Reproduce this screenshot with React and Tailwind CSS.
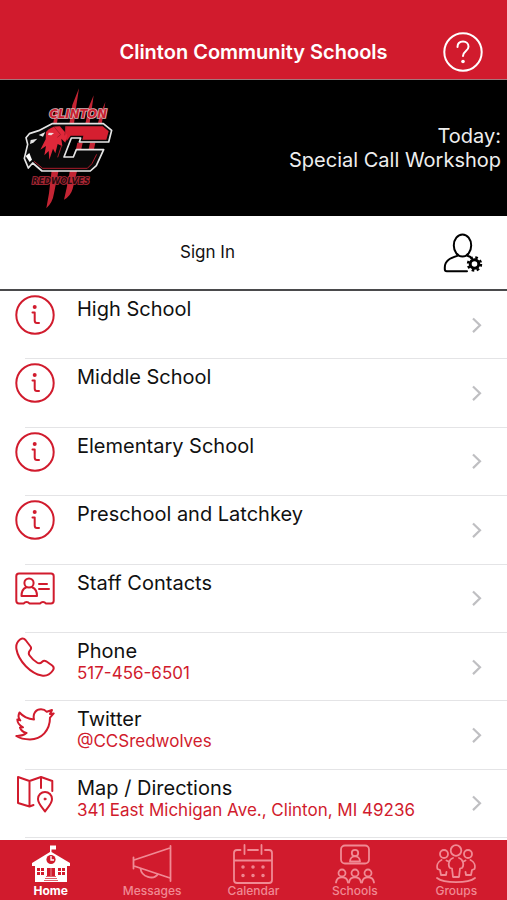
import React from "react";

const stroke = {
  fill: "none",
  stroke: "currentColor",
  strokeLinecap: "round",
  strokeLinejoin: "round",
};

function InfoIcon() {
  return (
    <svg viewBox="0 0 40 40" className="size-10" {...stroke} strokeWidth="2" aria-hidden="true">
      <circle cx="20" cy="20" r="18.7" />
      <circle cx="19.7" cy="12" r="2" fill="currentColor" stroke="none" />
      <path d="M17.5 17.5h2.2v8q0 2.500 2.300 2.500h2" />
    </svg>
  );
}

function StaffIcon() {
  return (
    <svg viewBox="0 0 40 40" className="size-10" {...stroke} strokeWidth="2" aria-hidden="true">
      <path d="M4 4.500h32q2.700 0 2.700 2.700v24.500q0 2.700-2.700 2.700h-5.200a3.400 3.400 0 0 0-5.600 0H14.400a3.400 3.400 0 0 0-5.600 0H4q-2.700 0-2.700-2.700V7.200Q1.300 4.500 4 4.500z" />
      <circle cx="14" cy="14" r="4.600" />
      <path d="M11 18.500c-3 1.200-4.500 4-4.500 8.500h15.500c0-4.500-1.500-7.300-4.500-8.500M24 15h8M24 20h10" />
    </svg>
  );
}

function PhoneIcon() {
  return (
    <svg viewBox="0 0 40 40" className="size-10" {...stroke} strokeWidth="2" aria-hidden="true">
      <path d="M5 2.500C7.500.8 9 1.200 10.500 3l5 6.500c1 1.400.6 2.600-.3 3.600-2 2.200-2 3.400-.6 5.400 2 2.800 4.500 5.200 7.400 7 2 1.300 3.200 1.300 5.200-.8 1.200-1.200 2.500-1.400 4-.4l6 4.200c1.800 1.400 2 3 .6 5-2.600 3.800-6.400 5.800-11 5C16 36.500 3.500 24.500 1.400 12 .8 8 2 4.800 5 2.500z" />
    </svg>
  );
}

function TwitterIcon() {
  return (
    <svg viewBox="0 0 40 40" className="size-10" {...stroke} strokeWidth="2" aria-hidden="true">
      <path d="M4.500 7.500c4 4.500 8.500 6.500 14.500 7-1.500-6 2-10.300 7-10.300 2.700 0 4.400 1 5.800 2.600L37 5l-2 4 3.700-.6-3.700 4.200c0 13-8.500 21.800-20 21.800-5.500 0-10-1-13.700-3.400 4 .2 7.500-.8 10.200-3-3.500-.6-5.500-2.500-6.500-5.300l3-.4C4.500 20.500 2.500 18 2.300 14.500l3 .9C3 13 3 10.500 4.500 7.500z" />
    </svg>
  );
}

function MapIcon() {
  return (
    <svg viewBox="0 0 40 40" className="size-10" {...stroke} strokeWidth="2" aria-hidden="true">
      <path d="M3 3l11.500 4L26 3l11.300 4v10M3 3v26l11.500 3.500 4-1.500M14.500 7v25.500M26 3v11" />
      <path d="M30 37.500c-2-3.500-7-7.500-7-12.500a7 7 0 0 1 14 0c0 5-5 9-7 12.500z" />
      <circle cx="30" cy="25" r="1" fill="currentColor" strokeWidth="1" />
    </svg>
  );
}

function HelpIcon() {
  return (
    <svg viewBox="0 0 40 40" className="size-10" {...stroke} strokeWidth="2" aria-hidden="true">
      <circle cx="20" cy="20" r="18.700" />
      <path d="M14.500 15c0-3.500 2.300-5.500 5.500-5.500s5.500 2 5.500 5.200c0 4.300-5.500 4.300-5.500 9.300" />
      <circle cx="20" cy="29.500" r="1.800" fill="currentColor" stroke="none" />
    </svg>
  );
}

function ProfileIcon() {
  return (
    <svg viewBox="0 0 40 40" className="size-10" {...stroke} strokeWidth="2" aria-hidden="true">
      <ellipse cx="19.500" cy="12.500" rx="8.700" ry="11" />
      <path d="M14.500 21.500v1.300C8 25 1.800 27 1.800 34.500v1.700q0 2 2 2H24M24.500 21.500v1.300l3 1.200" />
      <circle cx="31.500" cy="31" r="4.300" strokeWidth="3" />
      <circle cx="31.500" cy="31" r="6.500" strokeWidth="2.400" strokeDasharray="2.600 2.505" strokeLinecap="butt" />
    </svg>
  );
}

function TeamLogo() {
  return (
    <svg viewBox="0 0 360 408" className="h-[136px] w-[120px]" role="img" aria-label="Clinton Redwolves">
      <g fill="#c42534">
        <path d="M207 25l-8 52-8 62h-14l10-64z" />
        <path d="M251 46l-5 36-9 60h-13l12-60z" />
        <path d="M286 66l-7 45-6 30h-12l10-40z" />
        <path d="M147 90l-7 45h-11l7-45z" />
        <path d="M146 270l-14 70q-4 28-23 45l8-45 8-70z" />
        <path d="M202 270l-14 56q-6 22-26 33l8-35 10-54z" />
        <path d="M202 188h16l-5 24h-16zM240 188h16l-5 24h-16z" />
      </g>
      <path
        d="M126 131h154l25 20-9 35h-88l4-12h-28l-22 57h28l9-22h82l-22 48-18 16H96l-28-24-13 15-12-29 10-42-5-20 10-12 28-9z"
        fill="#090909"
        stroke="#e6e6e6"
        strokeWidth="5"
        strokeLinejoin="round"
      />
      <path d="M166 139h112l18 15-7 25h-72l3-12h-38l-12 16-6-20z" fill="#d51f30" />
      <path d="M108 156q14-18 42-17l22 26-6 23-12-12 3 23-14-7-7 28-7-14-11 33-2-26-13 13 5-28-17 11 16-31z" fill="#e0283a" />
      <path d="M116 158l16 1-8 7-10-1z" fill="#f3d9dc" />
      <path d="M86 165l20-9-7 14zM62 180l20-4-12 12-10 4z" fill="#e6e6e6" />
      <path d="M47 228l12 18 7-7-8-20z" fill="#fff" />
      <path d="M132 140l20 24-10 8M168 140l-4 26M155 196l-12 36M72 244l26 21h134l14-14 14-28" fill="none" stroke="#a91c2b" strokeWidth="3" />
      <text x="118" y="114" className="font-['DejaVu_Sans'] text-[35px] font-bold italic" fill="#c91f30" stroke="#d9b4b8" strokeWidth="5" paintOrder="stroke">CLINTON</text>
      <text x="66" y="311" className="font-['DejaVu_Sans'] text-[25px] font-bold italic" fill="#2a0a0e" stroke="#b92a39" strokeWidth="5" paintOrder="stroke">REDWOLVES</text>
    </svg>
  );
}

function HomeIcon() {
  return (
    <svg viewBox="0 0 40 40" className="size-10" fill="currentColor" aria-hidden="true">
      <path d="M19 1.500h6v4h-4.500V8L39 19v3h-3v16H4V22H1v-3L19 8z" />
      <g fill="#d11b2d">
        <circle cx="20" cy="15.500" r="4.600" />
        <path d="M6 24h3v3H6zM10 24h3v3h-3zM6 28h3v3H6zM10 28h3v3h-3zM27 24h3v3h-3zM31 24h3v3h-3zM27 28h3v3h-3zM31 28h3v3h-3zM16 24h8v8h-8z" />
      </g>
      <path d="M20 12v4h3" fill="none" stroke="currentColor" strokeWidth="1.300" />
      <path d="M20 24v8" stroke="currentColor" strokeWidth=".5" />
      <path d="M15 32.500h10M14 34.500h12M13 36.500h14" stroke="#d11b2d" strokeWidth=".7" />
    </svg>
  );
}

function MessagesIcon() {
  return (
    <svg viewBox="0 0 40 40" className="size-10" {...stroke} strokeWidth="1.800" aria-hidden="true">
      <path d="M1.500 13.500v11M2 16L38 4M2 22l36 12M38.500 2v35M8.500 24.500c1 8.500 13 12 17.500 5.500" />
    </svg>
  );
}

function CalendarIcon() {
  return (
    <svg viewBox="0 0 40 40" className="size-10" {...stroke} strokeWidth="1.800" aria-hidden="true">
      <path d="M11.500 1v9M28.500 1v9M15 6h10M7.500 6H4Q1 6 1 9v27q0 3 3 3h32q3 0 3-3V9q0-3-3-3h-4M1 16.500h38" />
      {[10, 20, 30].map((x) => (
        <g key={x} strokeWidth="1.500">
          <circle cx={x} cy="23" r="1" />
          <circle cx={x} cy="31.500" r="1" />
        </g>
      ))}
    </svg>
  );
}

function SchoolsIcon() {
  return (
    <svg viewBox="0 0 40 40" className="size-10" {...stroke} strokeWidth="1.800" aria-hidden="true">
      <rect x="6" y="1.500" width="28" height="18" rx="4" />
      <circle cx="20" cy="9" r="3.200" />
      <path d="M15 17.500c0-7 10-7 10 0z" />
      {[7, 20, 33].map((x) => (
        <g key={x}>
          <circle cx={x} cy="29" r="3.500" />
          <path d={`M${x - 6} 38.500c1-7 11-7 12 0`} />
        </g>
      ))}
    </svg>
  );
}

function GroupsIcon() {
  return (
    <svg viewBox="0 0 40 40" className="size-10" {...stroke} strokeWidth="1.800" aria-hidden="true">
      <circle cx="20" cy="6.500" r="5.300" />
      <circle cx="8" cy="10" r="4" />
      <circle cx="32" cy="10" r="4" />
      <path d="M17 14c-4 1-5.500 7-3 10l2 .5 1 8.500h6l1-8.500 2-.5c2.500-3 1-9-3-10M5.500 16c-4 2-5 6-4 9l2.500 1 1 5h5l.5-3M34.500 16c4 2 5 6 4 9L36 26l-1 5h-5l-.5-3M10.500 16.500l2 1M29.500 16.500l-2 1M1 34c7 5.500 31 5.500 38 0" />
    </svg>
  );
}

const links = [
  { title: "High School", Icon: InfoIcon },
  { title: "Middle School", Icon: InfoIcon },
  { title: "Elementary School", Icon: InfoIcon },
  { title: "Preschool and Latchkey", Icon: InfoIcon },
  { title: "Staff Contacts", Icon: StaffIcon },
  { title: "Phone", detail: "517-456-6501", Icon: PhoneIcon },
  { title: "Twitter", detail: "@CCSredwolves", Icon: TwitterIcon },
  { title: "Map / Directions", detail: "341 East Michigan Ave., Clinton, MI 49236", Icon: MapIcon },
];

const tabs = [
  { label: "Home", Icon: HomeIcon, active: true },
  { label: "Messages", Icon: MessagesIcon },
  { label: "Calendar", Icon: CalendarIcon },
  { label: "Schools", Icon: SchoolsIcon },
  { label: "Groups", Icon: GroupsIcon },
];

export default function App() {
  return (
    <div className="flex min-h-screen flex-col bg-white font-['Inter','Liberation_Sans',sans-serif] text-[#111111]">
      <header className="grid h-20 grid-cols-[1fr_auto_1fr] items-end border-b border-[#a4777c] bg-[#d11b2d] px-6 pb-[7px] text-white">
        <h1 className="col-start-2 pb-1 text-xl leading-8 font-semibold">Clinton Community Schools</h1>
        <button type="button" aria-label="Help" className="justify-self-end">
          <HelpIcon />
        </button>
      </header>

      <section className="flex h-[136px] items-center justify-between bg-black pr-1.5 pl-2.5 text-white">
        <TeamLogo />
        <p className="text-right text-xl leading-6 text-[#eeeeee]">
          Today:
          <br />
          Special Call Workshop
        </p>
      </section>

      <div className="flex h-[75px] items-center border-b-2 border-[#4a4a4c] pr-6">
        <button type="button" className="flex-1 text-[17px]">Sign In</button>
        <button type="button" aria-label="Account settings" className="ml-7 text-black">
          <ProfileIcon />
        </button>
      </div>

      <ul className="grid flex-1 auto-rows-fr pb-0.5">
        {links.map(({ title, detail, Icon }) => (
          <li key={title} className="flex flex-col">
            <a href="#" className="flex flex-1 items-center pr-5 pl-[15px]">
              <span className="self-start pt-1 text-[#d11b2d]">
                <Icon />
              </span>
              <span className="ml-[22px] flex-1 self-start pt-1.5">
                <span className="block text-xl leading-6">{title}</span>
                {detail && <span className="block text-[17px] leading-5 text-[#d11b2d]">{detail}</span>}
              </span>
              <svg viewBox="0 0 20 20" className="size-5 text-[#bfbfc2]" {...stroke} strokeWidth="2.200" strokeLinecap="butt" strokeLinejoin="miter" aria-hidden="true">
                <path d="M6 3.500l7 6.800-7 6.800" />
              </svg>
            </a>
            <div className="ml-[25px] border-b border-[#e4e4e6]" />
          </li>
        ))}
      </ul>

      <nav className="grid h-[60px] grid-cols-5 bg-[#d11b2d]">
        {tabs.map(({ label, Icon, active }) => (
          <button
            key={label}
            type="button"
            className={`flex flex-col items-center pt-1 text-xs leading-[14px] ${active ? "font-bold text-white" : "font-medium text-[#f08a94]"}`}
          >
            <Icon />
            <span>{label}</span>
          </button>
        ))}
      </nav>
    </div>
  );
}
